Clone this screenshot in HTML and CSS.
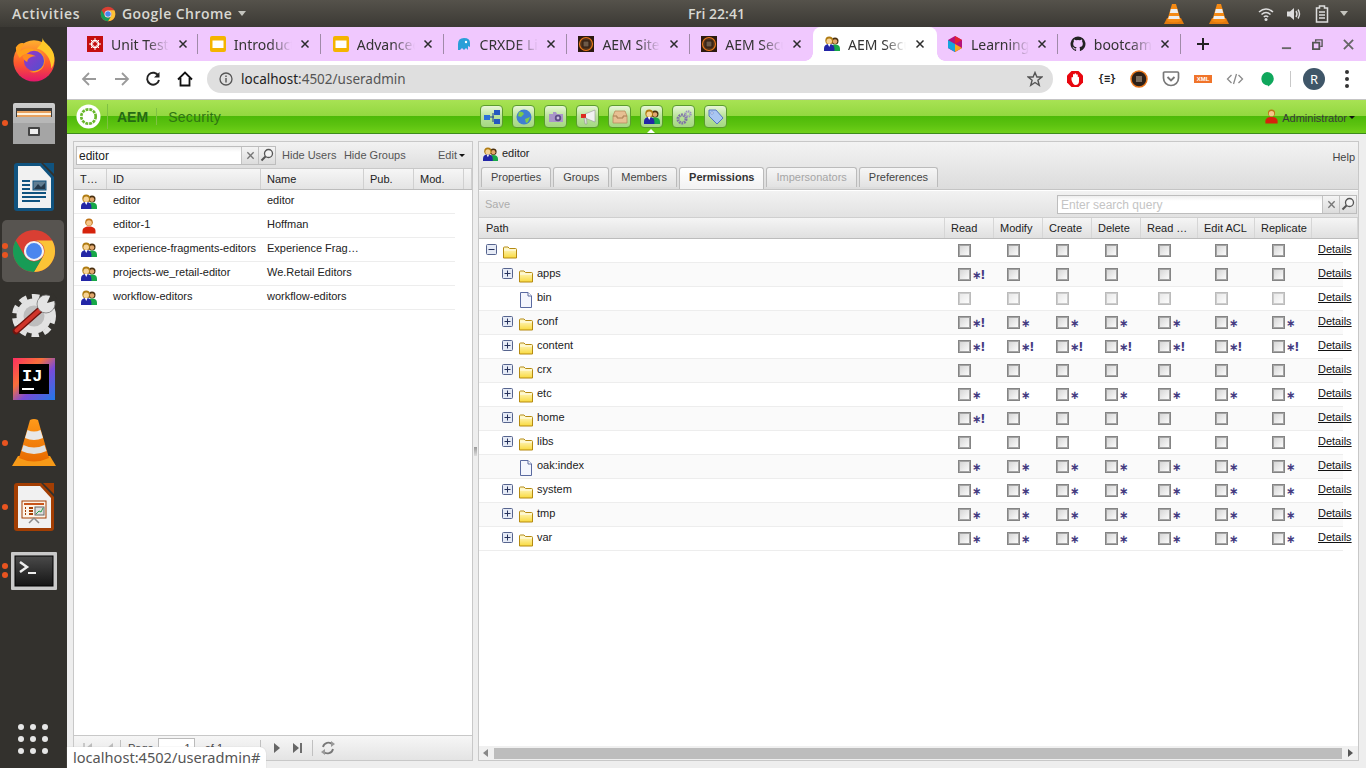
FILE: index.html
```html
<!DOCTYPE html>
<html lang="en">
<head>
<meta charset="utf-8">
<title>AEM Security</title>
<link rel="stylesheet" href="styles.css">
</head>
<body>
<svg class="defs" aria-hidden="true">
  <defs>
    <linearGradient id="gFox" x1="0" y1="0" x2="0" y2="1"><stop offset="0" stop-color="#ffb02e"/><stop offset=".55" stop-color="#ff5a2c"/><stop offset="1" stop-color="#e3166b"/></linearGradient>
    <linearGradient id="gFoxIn" x1="0" y1="0" x2="1" y2="1"><stop offset="0" stop-color="#9a35c8"/><stop offset="1" stop-color="#4f50cf"/></linearGradient>
    <linearGradient id="gCab" x1="0" y1="0" x2="0" y2="1"><stop offset="0" stop-color="#cfcfcf"/><stop offset="1" stop-color="#8d8d8d"/></linearGradient>
    <linearGradient id="gIJ" x1="0" y1="0" x2="1" y2="1"><stop offset="0" stop-color="#fe2e61"/><stop offset=".35" stop-color="#f9703a"/><stop offset=".6" stop-color="#7a4bd8"/><stop offset="1" stop-color="#1f7ae8"/></linearGradient>
    <linearGradient id="gCone" x1="0" y1="0" x2="0" y2="1"><stop offset="0" stop-color="#ff9a1a"/><stop offset="1" stop-color="#e86a00"/></linearGradient>
    <linearGradient id="gFold" x1="0" y1="0" x2="0" y2="1"><stop offset="0" stop-color="#fffbd6"/><stop offset="1" stop-color="#f9d93c"/></linearGradient>
    <linearGradient id="gTerm" x1="0" y1="0" x2="0" y2="1"><stop offset="0" stop-color="#4a4a4a"/><stop offset="1" stop-color="#151515"/></linearGradient>

    <symbol id="chrome" viewBox="0 0 48 48">
      <circle cx="24" cy="24" r="22" fill="#d93f33"/>
      <path d="M24 13H43A22 22 0 0 1 24 46L33.5 29.5A11 11 0 0 0 24 13Z" fill="#fbc336"/>
      <path d="M5 13L14.5 29.5A11 11 0 0 0 33.5 29.5L24 46A22 22 0 0 1 5 13Z" fill="#179c56"/>
      <circle cx="24" cy="24" r="10.5" fill="#f2f2f2"/><circle cx="24" cy="24" r="8.3" fill="#4a86ee"/>
    </symbol>
    <symbol id="firefox" viewBox="0 0 48 48">
      <circle cx="24" cy="26" r="21.5" fill="url(#gFox)"/>
      <path d="M33 2C34 7 40 9 43 15C47 22 45 30 42 34C42 24 36 15 27 13C30 10 33 7 33 2Z" fill="#ffc928"/>
      <path d="M5 12C8 7 13 6 14 9C12 10 10 13 10 16C13 12 20 12 24 14C30 14 36 20 35 28C34 36 26 40 19 37C26 38 30 33 29 29L18 25C15 23 17 20 19 20C16 18 12 19 9 23C7 20 5 16 5 12Z" fill="#ff9f1c"/>
      <circle cx="24" cy="26" r="10.5" fill="url(#gFoxIn)"/>
      <path d="M12 21C16 17 22 19 26 21C21 21 17 23 17 27C14 26 13 24 12 21Z" fill="#ff8a1f"/>
    </symbol>
    <symbol id="files" viewBox="0 0 44 42">
      <rect x="1" y="1" width="42" height="41" rx="2" fill="url(#gCab)"/>
      <rect x="4" y="6" width="36" height="15" fill="#3b3b3b"/>
      <path d="M5 9H39V16H5Z" fill="#e8a15e"/><path d="M5 11H39V13H5Z" fill="#fff3df"/>
      <rect x="1" y="15" width="42" height="6" fill="#b7b7b7"/><rect x="1" y="21" width="42" height="21" fill="#a5a5a5"/>
      <rect x="16" y="25" width="12" height="9" rx="1" fill="#444"/><rect x="18" y="27" width="8" height="5" fill="#eee"/>
    </symbol>
    <symbol id="writer" viewBox="0 0 40 48">
      <path d="M3 0H27L40 14V45A3 3 0 0 1 37 48H3A3 3 0 0 1 0 45V3A3 3 0 0 1 3 0Z" fill="#10537f"/>
      <path d="M29 0H40V11Z" fill="#10537f"/>
      <path d="M4 3H26L37 15V45H4Z" fill="#f1f1f1"/>
      <path d="M8 18H16M8 22H16M8 26H16M8 30H32M8 34H32M8 38H26" stroke="#10537f" stroke-width="2"/>
      <rect x="19" y="18" width="13" height="9" fill="#5f7d92" stroke="#10537f"/><path d="M20 26L24 21L27 24L31 20V26Z" fill="#23384a"/>
    </symbol>
    <symbol id="impress" viewBox="0 0 40 48">
      <path d="M3 0H27L40 14V45A3 3 0 0 1 37 48H3A3 3 0 0 1 0 45V3A3 3 0 0 1 3 0Z" fill="#a33e03"/>
      <path d="M29 0H40V11Z" fill="#a33e03"/>
      <path d="M4 3H26L37 15V45H4Z" fill="#f1f1f1"/>
      <rect x="8" y="18" width="24" height="17" fill="#fdf3e8" stroke="#a33e03"/>
      <path d="M10 21H30" stroke="#c8551b" stroke-width="2"/>
      <path d="M11 25H12M11 28H12M11 31H12M15 25H19M15 28H19M15 31H19" stroke="#a33e03" stroke-width="2"/>
      <rect x="21" y="24" width="9" height="8" fill="#ddd" stroke="#666"/><path d="M22 31L25 28L27 29L29 25" stroke="#29a04a" fill="none"/>
      <path d="M20 35L15 40M20 35L25 40" stroke="#8a8a8a" stroke-width="1.5"/>
    </symbol>
    <symbol id="settings" viewBox="0 0 46 44">
      <circle cx="23" cy="23" r="17.500" fill="#e2e2e2"/>
      <circle cx="23" cy="23" r="19.500" fill="none" stroke="#e2e2e2" stroke-width="5" stroke-dasharray="7.500 5.240"/>
      <circle cx="23" cy="23" r="10.500" fill="#bdbdbd"/>
      <path d="M5 38L31 15" stroke="#6f130d" stroke-width="6.500" stroke-linecap="round"/>
      <path d="M5.500 37.500L31 15" stroke="#d0352a" stroke-width="4" stroke-linecap="round"/>
      <circle cx="35" cy="11" r="9" fill="#e4e4e4" stroke="#777" stroke-width=".8"/>
      <path d="M36 10L41 -1L47 7Z" fill="#33312d"/>
    </symbol>
    <symbol id="vlc" viewBox="0 0 44 48">
      <ellipse cx="22" cy="42" rx="16" ry="5" fill="#c75e00"/>
      <path d="M6 37L0 47H44L38 37Z" fill="#f79a18"/>
      <path d="M18 1Q22 -1 26 1L37 39Q22 46 7 39Z" fill="url(#gCone)"/>
      <path d="M15.500 11Q22 14 28.500 11L31 19Q22 23 13 19Z" fill="#e8e8e8"/>
      <path d="M11.500 26Q22 31 32.500 26L34.500 32Q22 38 9.500 32Z" fill="#e0e0e0"/>
    </symbol>
    <symbol id="grp" viewBox="0 0 16 16">
      <circle cx="11" cy="5" r="3.500" fill="#4a3010"/><path d="M6 15V12.500C6 10 8 8.500 11 8.500S16 10 16 12.500V15Z" fill="#17a848"/>
      <circle cx="11" cy="5.600" r="2.300" fill="#e2a86e"/>
      <circle cx="5.200" cy="4.500" r="3.900" fill="#b07c12"/><circle cx="5.200" cy="5.200" r="2.700" fill="#f7d394"/>
      <path d="M0 15V12.500C0 9.500 2 8 5.200 8S10.400 9.500 10.400 12.500V15Z" fill="#2326a6"/><path d="M3.800 8L5.200 11L6.600 8Z" fill="#fff"/>
    </symbol>
    <symbol id="usr" viewBox="0 0 16 16">
      <circle cx="8" cy="4.200" r="3.800" fill="#c07418"/><circle cx="8" cy="5" r="2.800" fill="#f6c68a"/>
      <path d="M1.500 15.500V13C1.500 10 4 8.500 8 8.500S14.500 10 14.500 13V15.500Z" fill="#d6230c"/>
    </symbol>
    <symbol id="fold" viewBox="0 0 14 14">
      <path d="M.5 13V3A1 1 0 0 1 1.500 2H5L6.500 3.500H12.500A1 1 0 0 1 13.500 4.500V13Z" fill="url(#gFold)" stroke="#b58a12"/>
      <path d="M1 5H13" stroke="#fff" stroke-width=".8"/>
    </symbol>
    <symbol id="doc" viewBox="0 0 14 16">
      <path d="M1.500 .5H9L12.500 4V15.500H1.500Z" fill="#f4f6fd" stroke="#5a6aa0"/><path d="M9 .5V4H12.500" fill="#fff" stroke="#5a6aa0"/>
    </symbol>
    <symbol id="plus" viewBox="0 0 11 11">
      <rect x=".5" y=".5" width="10" height="10" rx="1" fill="#e6ebf6" stroke="#56648e"/><path d="M2.500 5.500H8.500M5.500 2.500V8.500" stroke="#26325c"/>
    </symbol>
    <symbol id="minus" viewBox="0 0 11 11">
      <rect x=".5" y=".5" width="10" height="10" rx="1" fill="#e6ebf6" stroke="#56648e"/><path d="M2.500 5.500H8.500" stroke="#26325c"/>
    </symbol>
    <symbol id="close" viewBox="0 0 10 10"><path d="M1.500 1.500L8.500 8.500M8.500 1.500L1.500 8.500" stroke="#2c2c2c" stroke-width="1.500"/></symbol>
    <symbol id="mag" viewBox="0 0 14 14"><circle cx="8.500" cy="5.500" r="4" fill="#f4f4f4" stroke="#555" stroke-width="1.300"/><path d="M5.500 8.500L1.500 12.500" stroke="#555" stroke-width="2"/></symbol>
    <symbol id="aem" viewBox="0 0 16 16"><rect width="16" height="16" fill="#2c1a10"/><circle cx="8" cy="8" r="6.500" fill="#50331c" stroke="#e8761a" stroke-width="1.200"/><rect x="5" y="5" width="6" height="6" fill="#6e5a48" stroke="#2c1a10"/></symbol>
    <symbol id="slides" viewBox="0 0 16 16"><rect width="16" height="16" rx="2" fill="#f4b400"/><rect x="2.500" y="4.500" width="11" height="7.500" fill="#fff"/></symbol>
    <symbol id="cone" viewBox="0 0 22 22">
      <path d="M1 21L4 15H18L21 21Z" fill="#e07a10"/><path d="M9 1H13L18 18Q11 21 4 18Z" fill="#f58a14"/>
      <path d="M7.800 6H14.200L15.200 10H6.800Z" fill="#eee"/><path d="M6 13H16L16.800 16H5.200Z" fill="#eee"/>
    </symbol>
  </defs>
</svg>

<header class="topbar">
  <div class="top-left">
    <span class="activities">Activities</span>
    <svg class="top-chrome"><use href="#chrome"/></svg>
    <span class="appname">Google Chrome</span>
    <i class="caret-top"></i>
  </div>
  <span class="clock">Fri 22:41</span>
  <div class="top-right">
    <svg class="cone cone-a"><use href="#cone"/></svg>
    <svg class="cone cone-b"><use href="#cone"/></svg>
    <svg class="tray wifi" viewBox="0 0 16 16"><path d="M1 6Q8 0 15 6M3.500 8.500Q8 4.500 12.500 8.500M5.800 11Q8 9 10.200 11" fill="none" stroke="#ddd" stroke-width="1.600"/><circle cx="8" cy="13.500" r="1.500" fill="#ddd"/></svg>
    <svg class="tray vol" viewBox="0 0 16 16"><path d="M1 5.500H4L8 2V14L4 10.500H1Z" fill="#ddd"/><path d="M10 5Q12 8 10 11M12 3.500Q15 8 12 12.500" fill="none" stroke="#ddd" stroke-width="1.400"/></svg>
    <svg class="tray bat" viewBox="0 0 14 18"><path d="M1.500 3H4.500V1H9.500V3H12.500V17H1.500Z" fill="none" stroke="#ddd" stroke-width="1.500"/><path d="M4 7H10M4 10H10M4 13H10" stroke="#ddd" stroke-width="1.400"/></svg>
    <i class="caret-top caret-tray"></i>
  </div>
</header>

<nav class="dock">
  <div class="dock-item"><svg class="ic-fox"><use href="#firefox"/></svg></div>
  <div class="dock-item"><i class="dot dot-1"></i><svg class="ic-files"><use href="#files"/></svg></div>
  <div class="dock-item"><svg class="ic-doc"><use href="#writer"/></svg></div>
  <div class="dock-item active"><i class="dot dot-2a"></i><i class="dot dot-2b"></i><svg class="ic-chrome"><use href="#chrome"/></svg></div>
  <div class="dock-item"><svg class="ic-set"><use href="#settings"/></svg></div>
  <div class="dock-item">
    <svg class="ic-ij" viewBox="0 0 42 42"><rect width="42" height="42" fill="url(#gIJ)"/><rect x="6" y="6" width="30" height="30" fill="#000"/><text x="9" y="23" class="ij-text">IJ</text><rect x="9" y="30" width="12" height="2" fill="#fff"/></svg>
  </div>
  <div class="dock-item"><i class="dot dot-1"></i><svg class="ic-vlc"><use href="#vlc"/></svg></div>
  <div class="dock-item"><i class="dot dot-1"></i><svg class="ic-doc"><use href="#impress"/></svg></div>
  <div class="dock-item"><i class="dot dot-2a"></i><i class="dot dot-2b"></i>
    <svg class="ic-term" viewBox="0 0 46 38"><rect width="46" height="38" rx="1" fill="#c9c9c9"/><rect x="4" y="4" width="38" height="30" fill="url(#gTerm)" stroke="#000"/><path d="M9 10L16 15L9 20" fill="none" stroke="#eee" stroke-width="2.500"/><rect x="17" y="20" width="8" height="2" fill="#eee"/></svg>
  </div>
  <div class="apps-grid"><i></i><i></i><i></i><i></i><i></i><i></i><i></i><i></i><i></i></div>
</nav>

<main class="browser">
  <div class="tabstrip">
    <div class="tab"><svg class="fav" viewBox="0 0 16 16"><rect width="16" height="16" fill="#c50f0f"/><circle cx="8" cy="8" r="3.500" fill="none" stroke="#fff" stroke-width="1.600"/><path d="M8 2V14M2 8H14M4 4L12 12M12 4L4 12" stroke="#fff"/><circle cx="8" cy="8" r="2" fill="#c50f0f"/></svg><span class="tab-t">Unit Tests</span><svg class="tab-x"><use href="#close"/></svg></div>
    <div class="tab"><svg class="fav"><use href="#slides"/></svg><span class="tab-t">Introduction</span><svg class="tab-x"><use href="#close"/></svg></div>
    <div class="tab"><svg class="fav"><use href="#slides"/></svg><span class="tab-t">Advanced</span><svg class="tab-x"><use href="#close"/></svg></div>
    <div class="tab"><svg class="fav" viewBox="0 0 16 16"><path d="M2 14V8Q2 2 8 2Q14 2 14 7V11L12 10V14L10 12L8 14L6 12L4 14Z" fill="#2a9fd8"/><circle cx="10" cy="6" r="1.200" fill="#fff"/></svg><span class="tab-t">CRXDE Lite</span><svg class="tab-x"><use href="#close"/></svg></div>
    <div class="tab"><svg class="fav"><use href="#aem"/></svg><span class="tab-t">AEM Sites</span><svg class="tab-x"><use href="#close"/></svg></div>
    <div class="tab before-active"><svg class="fav"><use href="#aem"/></svg><span class="tab-t">AEM Security</span><svg class="tab-x"><use href="#close"/></svg></div>
    <div class="tab tab-active"><svg class="fav"><use href="#grp"/></svg><span class="tab-t">AEM Security</span><svg class="tab-x"><use href="#close"/></svg></div>
    <div class="tab"><svg class="fav" viewBox="0 0 16 16"><path d="M8 0L15 4V12L8 16L1 12V4Z" fill="#b5127c"/><path d="M1 4L8 8V16L1 12Z" fill="#14a5dd"/><path d="M8 8L15 12L8 16Z" fill="#f5a81c"/><path d="M8 0L15 4L8 8Z" fill="#e3232e"/></svg><span class="tab-t">Learning</span><svg class="tab-x"><use href="#close"/></svg></div>
    <div class="tab"><svg class="fav" viewBox="0 0 16 16"><path d="M8 .5A7.500 7.500 0 0 0 5.600 15.100C6 15.200 6.100 14.900 6.100 14.700V13.300C4 13.800 3.600 12.400 3.600 12.400C3.200 11.500 2.700 11.300 2.700 11.300C2 10.800 2.800 10.800 2.800 10.800C3.500 10.900 3.900 11.600 3.900 11.600C4.600 12.700 5.600 12.400 6.100 12.200C6.200 11.700 6.400 11.400 6.600 11.200C4.900 11 3.200 10.400 3.200 7.500C3.200 6.700 3.500 6 3.900 5.500C3.800 5.300 3.600 4.500 4 3.500C4 3.500 4.600 3.300 6.100 4.300A7 7 0 0 1 9.900 4.300C11.400 3.300 12 3.500 12 3.500C12.400 4.500 12.200 5.300 12.100 5.500C12.500 6 12.800 6.700 12.800 7.500C12.800 10.400 11.100 11 9.400 11.200C9.700 11.400 9.900 11.900 9.900 12.500V14.700C9.900 14.900 10 15.200 10.400 15.100A7.500 7.500 0 0 0 8 .5Z" fill="#222"/></svg><span class="tab-t">bootcamp</span><svg class="tab-x"><use href="#close"/></svg></div>
    <svg class="newtab" viewBox="0 0 14 14"><path d="M7 1V13M1 7H13" stroke="#222" stroke-width="2"/></svg>
    <div class="winctl">
      <svg viewBox="0 0 12 12"><path d="M1 10H11" stroke="#666" stroke-width="2"/></svg>
      <svg viewBox="0 0 12 12"><path d="M1 4H8V11H1Z" fill="none" stroke="#555" stroke-width="2"/><path d="M4 3V1H11V8H9" fill="none" stroke="#555" stroke-width="1.500"/></svg>
      <svg viewBox="0 0 12 12"><path d="M1 1L11 11M11 1L1 11" stroke="#666" stroke-width="2"/></svg>
    </div>
  </div>

  <div class="toolbar">
    <svg class="tb-ic tb-back" viewBox="0 0 16 16"><path d="M15 8H2M8 2L2 8L8 14" fill="none" stroke="#9a9a9a" stroke-width="1.800"/></svg>
    <svg class="tb-ic tb-fwd" viewBox="0 0 16 16"><path d="M1 8H14M8 2L14 8L8 14" fill="none" stroke="#9a9a9a" stroke-width="1.800"/></svg>
    <svg class="tb-ic tb-rel" viewBox="0 0 16 16"><path d="M13.500 5A6 6 0 1 0 14 9" fill="none" stroke="#222" stroke-width="1.900"/><path d="M14.500 1V6.500H9Z" fill="#222"/></svg>
    <svg class="tb-ic tb-home" viewBox="0 0 16 16"><path d="M1 8.500L8 1.500L15 8.500M3.500 7V14.500H12.500V7" fill="none" stroke="#111" stroke-width="1.800"/></svg>
    <div class="omni">
      <svg class="omni-i" viewBox="0 0 14 14"><circle cx="7" cy="7" r="6" fill="none" stroke="#555" stroke-width="1.300"/><path d="M7 6V10.500M7 3.500V5" stroke="#555" stroke-width="1.400"/></svg>
      <span class="omni-t">localhost<span class="omni-dim">:4502/useradmin</span></span>
      <svg class="omni-star" viewBox="0 0 16 16"><path d="M8 1.500L9.900 6H14.800L10.900 9.200L12.300 14.300L8 11.500L3.700 14.300L5.100 9.200L1.200 6H6.100Z" fill="none" stroke="#555" stroke-width="1.400"/></svg>
    </div>
    <div class="exts">
      <svg viewBox="0 0 18 18"><path d="M5.500 1H12.500L17 5.500V12.500L12.500 17H5.500L1 12.500V5.500Z" fill="#e8060f"/><path d="M5.500 10V7.500A.8.8 0 0 1 7 7.500V4.500A.9.9 0 0 1 8.600 4.500V3.800A.9.9 0 0 1 10.200 3.800V4.800A.9.9 0 0 1 11.800 4.800V7A.8.8 0 0 1 13 7.500V11Q13 15 9.500 15Q7 15 5.500 10Z" fill="#fff"/></svg>
      <span class="ext-json">{≡}</span>
      <svg viewBox="0 0 18 18"><circle cx="9" cy="9" r="8" fill="#2c2018" stroke="#e8761a" stroke-width="1.500"/><rect x="5.500" y="5.500" width="7" height="7" fill="#7c6c5c" stroke="#2c2018"/></svg>
      <svg viewBox="0 0 18 18"><path d="M2.500 2H15.500A1 1 0 0 1 16.500 3V8A7.500 7.500 0 0 1 1.500 8V3A1 1 0 0 1 2.500 2Z" fill="none" stroke="#777" stroke-width="1.700"/><path d="M5.500 7L9 10.500L12.500 7" fill="none" stroke="#777" stroke-width="1.900"/></svg>
      <span class="ext-xml">XML</span>
      <svg viewBox="0 0 18 18"><path d="M5.500 5L1.500 9L5.500 13M12.500 5L16.500 9L12.500 13M10.500 4L7.500 14" fill="none" stroke="#8a8a8a" stroke-width="1.300"/></svg>
      <svg viewBox="0 0 18 18"><path d="M9 2A6.800 6.800 0 0 1 15.800 8.800C15.800 12 13 15 10 16.500V15.500A6.800 6.800 0 0 1 9 2Z" fill="#0fa75c"/></svg>
      <i class="tb-div"></i>
      <span class="avatar">R</span>
      <span class="menu-dots"><i></i><i></i><i></i></span>
    </div>
  </div>

  <div class="aem-bar">
    <div class="brand">
      <svg class="aem-logo" viewBox="0 0 26 26"><circle cx="13" cy="13" r="12.500" fill="#fff"/><circle cx="13" cy="13" r="7.500" fill="none" stroke="#69b82c" stroke-width="2.800" stroke-dasharray="3 1"/><circle cx="13" cy="13" r="5" fill="#fff"/></svg>
      <i class="brand-div"></i>
      <span class="brand-aem">AEM</span>
      <i class="brand-div brand-div2"></i>
      <span class="brand-sec">Security</span>
    </div>
    <div class="console-nav">
      <span class="cbtn"><svg viewBox="0 0 16 16"><rect x="0" y="6" width="6" height="5" fill="#2b70d8"/><rect x="10" y="1" width="6" height="5" fill="#2558c0"/><rect x="10" y="10" width="6" height="5" fill="#2558c0"/><path d="M6 8H10M9 4V13" stroke="#1d3f90"/></svg></span>
      <span class="cbtn"><svg viewBox="0 0 16 16"><circle cx="8" cy="8" r="7.500" fill="#3f7fd2"/><path d="M3 3Q7 2 8 5L5 8L2 7ZM9 10L14 8L12 13L10 14Z" fill="#7dcc4a"/></svg></span>
      <span class="cbtn"><svg viewBox="0 0 16 16"><path d="M1 5H5V3H8L9 5H15V13H1Z" fill="#a995c9"/><circle cx="10" cy="9" r="3.200" fill="#5d4d86"/><circle cx="10" cy="9" r="1.400" fill="#cbbfe0"/></svg></span>
      <span class="cbtn"><svg viewBox="0 0 16 16"><path d="M5 5L15 1V13L5 9Z" fill="#f1f1f1" stroke="#999" stroke-width=".6"/><rect x="1" y="5" width="5" height="4" fill="#dd2a20"/><path d="M4 9L5 15H7L6.500 9Z" fill="#ddd" stroke="#888" stroke-width=".5"/></svg></span>
      <span class="cbtn"><svg viewBox="0 0 16 16"><path d="M3 2H13L15 7V14H1V7Z" fill="#e7bf92" stroke="#b98d5e" stroke-width=".8"/><path d="M1 7H5V9H11V7H15" fill="none" stroke="#a87c50"/></svg></span>
      <span class="cbtn cbtn-on"><svg viewBox="0 0 16 16"><use href="#grp"/></svg></span>
      <span class="cbtn"><svg viewBox="0 0 16 16"><circle cx="6" cy="10" r="4" fill="none" stroke="#7f72a8" stroke-width="3" stroke-dasharray="1.700 .8"/><circle cx="12" cy="5" r="2.600" fill="none" stroke="#9a8ec0" stroke-width="2.200" stroke-dasharray="1.300 .7"/></svg></span>
      <span class="cbtn"><svg viewBox="0 0 16 16"><path d="M1 1H8L15 9L9 15L1 7Z" fill="#a9c6f2" stroke="#5776c0"/><circle cx="4" cy="4" r="1.200" fill="#fff" stroke="#5776c0" stroke-width=".6"/></svg></span>
    </div>
    <div class="aem-user"><svg class="aem-user-i"><use href="#usr"/></svg><span>Administrator</span><i class="tri"></i></div>
  </div>

  <div class="workspace">
    <section class="panel left">
      <div class="l-tools">
        <div class="search l-search"><span class="search-v">editor</span><span class="s-btn"><svg class="s-x"><use href="#close"/></svg></span><span class="s-btn"><svg class="s-m"><use href="#mag"/></svg></span></div>
        <span class="l-link">Hide Users</span>
        <span class="l-link">Hide Groups</span>
        <span class="l-edit">Edit<i class="tri"></i></span>
      </div>
      <div class="l-head"><span>T…</span><span>ID</span><span>Name</span><span>Pub.</span><span>Mod.</span><span></span></div>
      <div class="l-body">
        <div class="l-row"><span class="l-ic"><svg><use href="#grp"/></svg></span><span>editor</span><span>editor</span></div>
        <div class="l-row"><span class="l-ic"><svg><use href="#usr"/></svg></span><span>editor-1</span><span>Hoffman</span></div>
        <div class="l-row"><span class="l-ic"><svg><use href="#grp"/></svg></span><span>experience-fragments-editors</span><span>Experience Frag…</span></div>
        <div class="l-row"><span class="l-ic"><svg><use href="#grp"/></svg></span><span>projects-we_retail-editor</span><span>We.Retail Editors</span></div>
        <div class="l-row"><span class="l-ic"><svg><use href="#grp"/></svg></span><span>workflow-editors</span><span>workflow-editors</span></div>
      </div>
      <div class="pager">
        <svg class="pg-first" viewBox="0 0 10 12"><path d="M1 1V11" stroke="#bbb" stroke-width="1.500"/><path d="M9 1V11L3 6Z" fill="#bbb"/></svg>
        <svg class="pg-prev" viewBox="0 0 10 12"><path d="M8 1V11L2 6Z" fill="#bbb"/></svg>
        <i class="pg-sep"></i>
        <span class="pg-t">Page</span>
        <span class="pg-in">1</span>
        <span class="pg-t">of 1</span>
        <i class="pg-sep pg-sep2"></i>
        <svg class="pg-next" viewBox="0 0 10 12"><path d="M2 1V11L8 6Z" fill="#666"/></svg>
        <svg class="pg-last" viewBox="0 0 10 12"><path d="M1 1V11L7 6Z" fill="#666"/><path d="M9 1V11" stroke="#444" stroke-width="1.500"/></svg>
        <i class="pg-sep pg-sep3"></i>
        <svg class="pg-ref" viewBox="0 0 16 16"><path d="M3 7A5.500 5.500 0 0 1 12.500 4.500" fill="none" stroke="#777" stroke-width="1.800"/><path d="M13 9A5.500 5.500 0 0 1 3.500 11.500" fill="none" stroke="#777" stroke-width="1.800"/><path d="M11 1L15 4L11 7ZM5 9L1 12L5 15Z" fill="#999"/></svg>
      </div>
    </section>

    <div class="splitter"><i></i></div>

    <section class="panel right">
      <div class="r-head">
        <div class="r-title"><svg><use href="#grp"/></svg><span>editor</span><span class="help">Help</span></div>
        <div class="r-tabs">
          <span class="r-tab">Properties</span><span class="r-tab">Groups</span><span class="r-tab">Members</span><span class="r-tab on">Permissions</span><span class="r-tab off">Impersonators</span><span class="r-tab">Preferences</span>
        </div>
      </div>
      <div class="r-tools">
        <span class="save">Save</span>
        <div class="search r-search"><span class="search-v ph">Enter search query</span><span class="s-btn"><svg class="s-x"><use href="#close"/></svg></span><span class="s-btn"><svg class="s-m"><use href="#mag"/></svg></span></div>
      </div>
      <div class="p-head"><span>Path</span><span>Read</span><span>Modify</span><span>Create</span><span>Delete</span><span>Read …</span><span>Edit ACL</span><span>Replicate</span><span></span></div>
      <div class="p-body">
        <div class="p-row"><span class="path lv0"><svg class="tg"><use href="#minus"/></svg><svg class="nd"><use href="#fold"/></svg></span><span class="c"><i></i></span><span class="c"><i></i></span><span class="c"><i></i></span><span class="c"><i></i></span><span class="c"><i></i></span><span class="c"><i></i></span><span class="c"><i></i></span><a class="det">Details</a></div>
        <div class="p-row"><span class="path"><svg class="tg"><use href="#plus"/></svg><svg class="nd"><use href="#fold"/></svg><b>apps</b></span><span class="c"><i></i><u>∗!</u></span><span class="c"><i></i></span><span class="c"><i></i></span><span class="c"><i></i></span><span class="c"><i></i></span><span class="c"><i></i></span><span class="c"><i></i></span><a class="det">Details</a></div>
        <div class="p-row"><span class="path"><span class="tg"></span><svg class="nd"><use href="#doc"/></svg><b>bin</b></span><span class="c dis"><i></i></span><span class="c dis"><i></i></span><span class="c dis"><i></i></span><span class="c dis"><i></i></span><span class="c dis"><i></i></span><span class="c dis"><i></i></span><span class="c dis"><i></i></span><a class="det">Details</a></div>
        <div class="p-row"><span class="path"><svg class="tg"><use href="#plus"/></svg><svg class="nd"><use href="#fold"/></svg><b>conf</b></span><span class="c"><i></i><u>∗!</u></span><span class="c"><i></i><u>∗</u></span><span class="c"><i></i><u>∗</u></span><span class="c"><i></i><u>∗</u></span><span class="c"><i></i><u>∗</u></span><span class="c"><i></i><u>∗</u></span><span class="c"><i></i><u>∗</u></span><a class="det">Details</a></div>
        <div class="p-row"><span class="path"><svg class="tg"><use href="#plus"/></svg><svg class="nd"><use href="#fold"/></svg><b>content</b></span><span class="c"><i></i><u>∗!</u></span><span class="c"><i></i><u>∗!</u></span><span class="c"><i></i><u>∗!</u></span><span class="c"><i></i><u>∗!</u></span><span class="c"><i></i><u>∗!</u></span><span class="c"><i></i><u>∗!</u></span><span class="c"><i></i><u>∗!</u></span><a class="det">Details</a></div>
        <div class="p-row"><span class="path"><svg class="tg"><use href="#plus"/></svg><svg class="nd"><use href="#fold"/></svg><b>crx</b></span><span class="c"><i></i></span><span class="c"><i></i></span><span class="c"><i></i></span><span class="c"><i></i></span><span class="c"><i></i></span><span class="c"><i></i></span><span class="c"><i></i></span><a class="det">Details</a></div>
        <div class="p-row"><span class="path"><svg class="tg"><use href="#plus"/></svg><svg class="nd"><use href="#fold"/></svg><b>etc</b></span><span class="c"><i></i><u>∗</u></span><span class="c"><i></i><u>∗</u></span><span class="c"><i></i><u>∗</u></span><span class="c"><i></i><u>∗</u></span><span class="c"><i></i><u>∗</u></span><span class="c"><i></i><u>∗</u></span><span class="c"><i></i><u>∗</u></span><a class="det">Details</a></div>
        <div class="p-row"><span class="path"><svg class="tg"><use href="#plus"/></svg><svg class="nd"><use href="#fold"/></svg><b>home</b></span><span class="c"><i></i><u>∗!</u></span><span class="c"><i></i></span><span class="c"><i></i></span><span class="c"><i></i></span><span class="c"><i></i></span><span class="c"><i></i></span><span class="c"><i></i></span><a class="det">Details</a></div>
        <div class="p-row"><span class="path"><svg class="tg"><use href="#plus"/></svg><svg class="nd"><use href="#fold"/></svg><b>libs</b></span><span class="c"><i></i></span><span class="c"><i></i></span><span class="c"><i></i></span><span class="c"><i></i></span><span class="c"><i></i></span><span class="c"><i></i></span><span class="c"><i></i></span><a class="det">Details</a></div>
        <div class="p-row"><span class="path"><span class="tg"></span><svg class="nd"><use href="#doc"/></svg><b>oak:index</b></span><span class="c"><i></i><u>∗</u></span><span class="c"><i></i><u>∗</u></span><span class="c"><i></i><u>∗</u></span><span class="c"><i></i><u>∗</u></span><span class="c"><i></i><u>∗</u></span><span class="c"><i></i><u>∗</u></span><span class="c"><i></i><u>∗</u></span><a class="det">Details</a></div>
        <div class="p-row"><span class="path"><svg class="tg"><use href="#plus"/></svg><svg class="nd"><use href="#fold"/></svg><b>system</b></span><span class="c"><i></i><u>∗</u></span><span class="c"><i></i><u>∗</u></span><span class="c"><i></i><u>∗</u></span><span class="c"><i></i><u>∗</u></span><span class="c"><i></i><u>∗</u></span><span class="c"><i></i><u>∗</u></span><span class="c"><i></i><u>∗</u></span><a class="det">Details</a></div>
        <div class="p-row"><span class="path"><svg class="tg"><use href="#plus"/></svg><svg class="nd"><use href="#fold"/></svg><b>tmp</b></span><span class="c"><i></i><u>∗</u></span><span class="c"><i></i><u>∗</u></span><span class="c"><i></i><u>∗</u></span><span class="c"><i></i><u>∗</u></span><span class="c"><i></i><u>∗</u></span><span class="c"><i></i><u>∗</u></span><span class="c"><i></i><u>∗</u></span><a class="det">Details</a></div>
        <div class="p-row"><span class="path"><svg class="tg"><use href="#plus"/></svg><svg class="nd"><use href="#fold"/></svg><b>var</b></span><span class="c"><i></i><u>∗</u></span><span class="c"><i></i><u>∗</u></span><span class="c"><i></i><u>∗</u></span><span class="c"><i></i><u>∗</u></span><span class="c"><i></i><u>∗</u></span><span class="c"><i></i><u>∗</u></span><span class="c"><i></i><u>∗</u></span><a class="det">Details</a></div>
      </div>
      <div class="hscroll"><i class="hs-l"></i><span class="hs-thumb"></span><i class="hs-r"></i></div>
    </section>
  </div>
  <div class="status-bubble">localhost:4502/useradmin#</div>
</main>
</body>
</html>
```

FILE: styles.css
```css
* { box-sizing: border-box; }
html, body { margin: 0; height: 100%; }
body {
  width: 1366px; height: 768px; overflow: hidden;
  display: grid; grid-template-columns: 67px 1299px; grid-template-rows: 27px 741px;
  font: 11px "Liberation Sans", Arial, sans-serif; color: #222;
  background: #33312d;
}
.defs { position: absolute; width: 0; height: 0; }
i { display: block; font-style: normal; }

/* GNOME top bar */
.topbar {
  grid-column: 1 / 3; display: flex; align-items: center; height: 27px;
  background: linear-gradient(#55524b, #3b3934);
  font-family: "Open Sans", "Noto Sans", sans-serif; font-size: 14px; font-weight: 600; color: #d8d8d2;
}
.top-left { width: 688px; display: flex; align-items: center; padding-left: 12px; }
.activities { width: 88px; letter-spacing: .7px; white-space: nowrap; }
.top-chrome { width: 16px; height: 16px; margin-right: 6px; }
.appname { letter-spacing: .45px; }
.caret-top { width: 0; height: 0; margin-left: 6px; border: 4.5px solid transparent; border-top: 5px solid #c4c4be; border-bottom: 0; }
.clock { font-size: 14px; }
.top-right { margin-left: auto; display: flex; align-items: center; padding-right: 18px; }
.cone { width: 22px; height: 22px; }
.cone-b { margin-left: 23px; }
.tray { height: 16px; width: 16px; }
.wifi { margin-left: 28px; }
.vol { margin-left: 12px; }
.bat { margin-left: 12px; height: 18px; }
.caret-tray { margin-left: 10px; }

/* Dock */
.dock { position: relative; display: flex; flex-direction: column; background: #33312d; }
.dock-item { position: relative; flex: 0 0 64px; display: flex; align-items: center; justify-content: center; }
.dock-item.active::before { content: ""; position: absolute; left: 2px; top: 1px; width: 62px; height: 62px; border-radius: 5px; background: #575450; }
.dock-item svg { position: relative; }
.dot { position: absolute; left: 2px; width: 6px; height: 6px; border-radius: 50%; background: #e95420; z-index: 1; }
.dot-1 { top: 29px; }
.dot-2a { top: 24px; }
.dot-2b { top: 33px; }
.ic-fox { width: 46px; height: 46px; }
.ic-files { width: 44px; height: 42px; }
.ic-doc { width: 40px; height: 48px; }
.ic-chrome { width: 46px; height: 46px; }
.ic-set { width: 46px; height: 44px; }
.ic-ij { width: 42px; height: 42px; }
.ij-text { font: bold 17px "Liberation Mono", monospace; fill: #fff; }
.ic-vlc { width: 44px; height: 48px; }
.ic-term { width: 46px; height: 38px; }
.apps-grid { position: absolute; left: 18px; bottom: 14px; display: grid; grid-template-columns: repeat(3, 6px); gap: 6px; }
.apps-grid i { width: 6px; height: 6px; border-radius: 50%; background: #e6e6e6; }

/* Browser chrome */
.browser { position: relative; display: flex; flex-direction: column; min-width: 0; background: #fff; }
.tabstrip { height: 34px; display: flex; align-items: stretch; padding-left: 8.500px; background: #f0c8fe; font-family: "Noto Sans", sans-serif; }
.tab { position: relative; width: 122.850px; flex: none; display: flex; align-items: center; padding-left: 11.500px; }
.tab::after { content: ""; position: absolute; right: 0; top: 7px; height: 20px; width: 1px; background: #a08aa8; }
.tab-active { width: 124px; margin-right: -1.150px; background: #fff; border-radius: 8px 8px 0 0; z-index: 1; }
.before-active::after { display: none; }
.tab-active::before, .tab-active::after { content: ""; position: absolute; top: auto; bottom: 0; width: 8px; height: 8px; background: radial-gradient(circle at 0 0, transparent 7.500px, #fff 8px); }
.tab-active::before { left: -8px; }
.tab-active::after { right: -8px; background: radial-gradient(circle at 100% 0, transparent 7.500px, #fff 8px); }
.fav { width: 16px; height: 16px; flex: none; }
.tab-t {
  width: 58px; margin-left: 8px; font-size: 14px; white-space: nowrap; overflow: hidden; color: #333;
  -webkit-mask-image: linear-gradient(90deg, #000 62%, transparent 100%); mask-image: linear-gradient(90deg, #000 62%, transparent 100%);
}
.tab-x { width: 10px; height: 10px; margin-left: 8.500px; flex: none; }
.newtab { width: 14px; height: 14px; align-self: center; margin-left: 15px; }
.winctl { margin-left: auto; display: flex; align-items: center; gap: 20px; padding-right: 12px; }
.winctl svg { width: 11px; height: 11px; }

.toolbar { height: 39px; flex: none; display: flex; align-items: center; padding: 0 0 2px 0; background: #fff; border-bottom: 1px solid #c5c5c5; box-shadow: inset 0 -1px 0 #fff; }
.tb-ic { width: 16px; height: 16px; flex: none; }
.tb-back { margin-left: 14px; }
.tb-fwd { margin-left: 17px; }
.tb-rel { margin-left: 15px; }
.tb-home { margin-left: 16px; }
.omni { width: 846px; height: 28px; margin-left: 14px; border-radius: 14px; background: #dfdfdf; display: flex; align-items: center; padding: 0 10px 0 12px; font: 13.500px "Noto Sans", sans-serif; color: #222; }
.omni-i { width: 14px; height: 14px; flex: none; }
.omni-t { margin-left: 8px; padding-bottom: 1px; }
.omni-dim { color: #555; }
.omni-star { width: 16px; height: 16px; margin-left: auto; }
.exts { flex: 1; display: flex; align-items: center; padding-left: 13px; }
.exts > svg, .ext-json, .ext-xml { width: 18px; height: 18px; flex: none; margin-right: 14px; }
.ext-json { font: bold 10px "DejaVu Sans Mono", monospace; text-align: center; line-height: 18px; color: #222; white-space: nowrap; }
.ext-xml { height: 8px; background: #f0742a; color: #fff; font: bold 6px/8px "Liberation Sans", sans-serif; text-align: center; }
.tb-div { width: 1px; height: 16px; background: #c8c8c8; margin: 0 12px 0 0; }
.avatar { width: 22px; height: 22px; border-radius: 50%; background: #3f5668; color: #fff; font: 13px/22px "Noto Sans", sans-serif; text-align: center; }
.menu-dots { display: flex; flex-direction: column; gap: 3px; margin-left: 20px; }
.menu-dots i { width: 4px; height: 4px; border-radius: 50%; background: #333; }

/* AEM console bar */
.aem-bar { height: 34px; flex: none; display: flex; align-items: center; border-bottom: 1px solid #3d8a1c; background: linear-gradient(#a8e254 0, #93d840 47%, #4cb908 48%, #5cc210 75%, #6fd018 100%); }
.brand { width: 413px; flex: none; display: flex; align-items: center; padding-left: 9px; }
.aem-logo { width: 25px; height: 25px; flex: none; }
.brand-div { width: 1px; height: 25px; margin: 0 9px 0 6px; background: #7fc143; }
.brand-aem { font: bold 14px "Liberation Sans", sans-serif; color: #256a14; }
.brand-div2 { margin: 0 11px 0 8px; height: 17px; }
.brand-sec { font-size: 14px; letter-spacing: .3px; color: #2f7512; }
.console-nav { display: flex; gap: 9px; }
.cbtn { position: relative; width: 23px; height: 23px; display: flex; align-items: center; justify-content: center; border: 1px solid #5c9c2e; border-radius: 4px; background: linear-gradient(#e8f6d8, #b9e29a 50%, #a4d882); }
.cbtn svg { width: 16px; height: 16px; }
.cbtn-on::after { content: ""; position: absolute; left: 6px; bottom: -6px; border: 4px solid transparent; border-bottom-color: #fff; border-top: 0; }
.aem-user { margin-left: auto; display: flex; align-items: center; padding: 2px 11px 0 0; color: #3a3a3a; }
.aem-user-i { width: 15px; height: 15px; margin-right: 3px; margin-top: -2px; }
.tri { width: 0; height: 0; margin-left: 2px; border: 3px solid transparent; border-top: 3px solid #111; border-bottom: 0; }

/* Workspace */
.workspace { flex: 1; min-height: 0; display: flex; padding: 7px 7px 7px 6px; background: #eee; }
.panel { border: 1px solid #c8c8c8; background: #fff; display: flex; flex-direction: column; position: relative; }
.left { width: 400px; flex: none; }
.splitter { width: 5px; flex: none; display: flex; align-items: center; justify-content: center; }
.splitter i { width: 3px; height: 9px; background: linear-gradient(#999, #ddd); }
.right { flex: 1; min-width: 0; }

.l-tools { height: 27px; flex: none; display: flex; align-items: center; padding-left: 2px; background: linear-gradient(#f2f2f2, #dfdfdf); border-bottom: 1px solid #c8c8c8; color: #555; }
.search { display: flex; height: 19px; border: 1px solid #bdbdbd; background: linear-gradient(#eee 0, #fff 5px); }
.search-v { flex: 1; padding-left: 2px; font-size: 12px; line-height: 18px; color: #222; }
.search-v.ph { padding-left: 3px; color: #c4c4c4; }
.s-btn { flex: none; width: 17px; display: flex; align-items: center; justify-content: center; background: linear-gradient(#f4f4f4, #dcdcdc); border-left: 1px solid #c2c2c2; }
.s-x { width: 9px; height: 9px; opacity: .6; }
.s-m { width: 14px; height: 14px; }
.l-search { width: 200px; margin-right: 6px; }
.l-link { margin-right: 7.500px; }
.l-edit { margin-left: auto; margin-right: 7px; display: flex; align-items: center; }
.l-head { height: 21px; flex: none; display: grid; grid-template-columns: 33px 154px 103px 50px 50px 1fr; background: linear-gradient(#f6f6f6, #e4e4e4); border-bottom: 1px solid #bcbcbc; }
.l-head span { padding: 1px 0 0 6px; line-height: 19px; border-right: 1px solid #d0d0d0; }
.l-body { flex: 1; min-height: 0; }
.l-row { width: 381px; height: 24px; display: grid; grid-template-columns: 33px 154px 103px; align-items: center; border-bottom: 1px solid #ededed; }
.l-row span { padding-left: 6px; padding-bottom: 3px; white-space: nowrap; }
.l-row .l-ic { padding: 0 0 0 7px; height: 16px; }
.l-ic svg { width: 16px; height: 16px; display: block; }
.pager { height: 25px; flex: none; display: flex; align-items: center; padding-left: 9px; background: linear-gradient(#f6f6f6, #e4e4e4); border-top: 1px solid #c8c8c8; color: #444; }
.pager svg { width: 10px; height: 12px; flex: none; }
.pg-prev { margin-left: 12px; }
.pg-sep { width: 1px; height: 16px; background: #c0c0c0; margin: 0 7px 0 5px; }
.pg-in { width: 37px; height: 20px; margin: 0 10px 0 4px; border: 1px solid #bbb; background: #fff; text-align: right; line-height: 18px; padding-right: 3px; }
.pg-sep2 { margin: 0 11px 0 37px; }
.pg-last { margin-left: 10px; }
.pg-sep3 { margin: 0 7px 0 10px; }
.pager .pg-ref { width: 16px; height: 16px; }

.r-head { height: 48px; flex: none; display: flex; flex-direction: column; background: linear-gradient(#f3f3f3, #dcdcdc); border-bottom: 1px solid #c4c4c4; }
.r-title { height: 25px; display: flex; align-items: flex-start; padding: 5px 3px 0 4px; }
.r-title svg { width: 15px; height: 15px; margin-right: 4px; }
.r-title span { line-height: 13px; }
.help { margin-left: auto; color: #444; margin-top: 4px; }
.r-tabs { display: flex; gap: 2px; padding-left: 2px; align-items: flex-start; height: 22px; }
.r-tab { height: 20px; padding: 0 9px; line-height: 18px; border: 1px solid #bbb; border-bottom: 0; border-radius: 3px 3px 0 0; background: linear-gradient(#f6f6f6, #e2e2e2); color: #444; }
.r-tab.on { height: 22px; font-weight: bold; background: linear-gradient(#fff, #f2f2f2); color: #333; }
.r-tab.off { color: #a6a6a6; }
.r-tools { height: 28px; flex: none; display: flex; align-items: center; padding: 0 1px 0 6px; background: linear-gradient(#f2f2f2, #e2e2e2); border-top: 1px solid #fff; border-bottom: 1px solid #cfcfcf; }
.save { color: #adadad; }
.r-search { width: 300px; margin-left: auto; }
.p-head { height: 21px; flex: none; display: grid; grid-template-columns: 466px 49px 49px 49px 49px 57px 57px 57px 1fr; background: linear-gradient(#f5f5f5, #e0e0e0); border-bottom: 1px solid #bcbcbc; }
.p-head span { padding: 1px 0 0 6px; line-height: 19px; border-right: 1px solid #d6d6d6; white-space: nowrap; }
.p-head span:first-child { padding-left: 7px; }
.p-body { flex: 1; min-height: 0; overflow: hidden; }
.p-row { width: 864px; height: 24px; display: grid; grid-template-columns: 465px 49px 49px 49px 49px 57px 57px 57px 1fr; align-items: center; border-bottom: 1px solid #ededed; }
.p-row:nth-child(even) { background: #fafafa; }
.path { display: flex; align-items: center; padding-left: 23px; }
.path.lv0 { padding-left: 7px; }
.tg { width: 11px; height: 11px; flex: none; margin-top: -3px; }
.nd { width: 14px; height: 16px; flex: none; margin-left: 6px; margin-top: 2px; }
.path b { margin-left: 4px; font-weight: normal; padding-bottom: 3px; }
.c { display: flex; justify-content: center; align-items: center; }
.c i { flex: none; width: 13px; height: 13px; border: 1px solid #848484; box-shadow: inset 0 0 0 1px #a4a4a4; background: linear-gradient(135deg, #d2d2d2, #fff); }
.c u { display: block; flex: none; width: 8px; margin-left: 1px; margin-right: -1px; text-decoration: none; white-space: nowrap; letter-spacing: -1.500px; font: bold 11.500px "DejaVu Sans", sans-serif; color: #463c82; }
.c::after { content: ""; flex: none; width: 8px; }
.c:has(u)::after { display: none; }
.c.dis i { opacity: .55; }
.det { padding-left: 7px; padding-bottom: 3px; color: #111; text-decoration: underline; }
.hscroll { height: 14px; flex: none; margin: 0 0 0 0; display: flex; align-items: center; background: #f0f0f0; }
.hs-l { margin-left: 4px; border: 4px solid transparent; border-right: 5px solid #888; border-left: 0; }
.hs-thumb { width: 848px; height: 11px; margin-left: 6px; background: #bdbdbd; }
.hs-r { margin-left: 6px; border: 4px solid transparent; border-left: 5px solid #555; border-right: 0; }

.status-bubble { position: absolute; left: 0; bottom: 0; width: 199px; height: 21px; padding-left: 6px; background: #fff; border-top-right-radius: 6px; box-shadow: 0 0 1px #bbb; font: 14.600px/21px "Noto Sans", sans-serif; color: #555; white-space: nowrap; }
```
